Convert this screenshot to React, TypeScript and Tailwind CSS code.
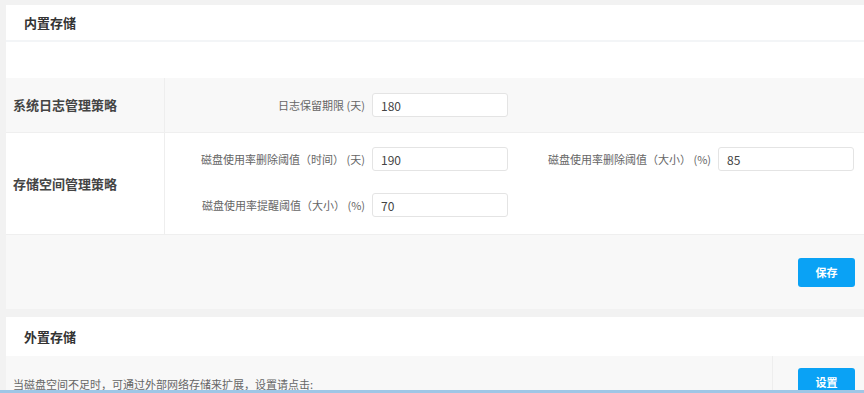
import { useState } from "react";

const font = { fontFamily: '"Noto Sans CJK SC", "Noto Sans", sans-serif' };

function Field({ label, value, labelW }: { label: string; value: string; labelW: string }) {
    const [v, setV] = useState(value);
    return (
        <div className="flex items-center">
            <span className={`${labelW} text-right text-[11px] text-[#666] pr-[7px] whitespace-nowrap`}>{label}</span>
            <input
                value={v}
                onChange={(e) => setV(e.target.value)}
                className="w-[136px] h-[24px] border border-[#e4e4e4] rounded-[3px] bg-white px-[8px] text-[12px] text-[#444] outline-none"
            />
        </div>
    );
}

export default function App() {
    return (
        <div className="relative h-[393px] w-[864px] overflow-hidden bg-[#f2f2f2] pt-[5px] pl-[6px]" style={font}>
            {/* 内置存储 */}
            <div className="bg-white">
                <div className="h-[37px] flex items-center pl-[18px] border-b-2 border-[#f3f5f7]">
                    <span className="text-[13px] font-bold text-[#333]">内置存储</span>
                </div>
                <div className="h-[36px]" />
                <div className="flex h-[55px] bg-[#f8f8f8] border-b border-[#efefef]">
                    <div className="w-[159px] flex items-center pl-[7px] border-r border-[#eeeeee]">
                        <span className="text-[13px] font-semibold text-[#444]">系统日志管理策略</span>
                    </div>
                    <div className="flex items-center">
                        <Field label="日志保留期限 (天)" value="180" labelW="w-[207px]" />
                    </div>
                </div>
                <div className="flex h-[102px] border-b border-[#efefef]">
                    <div className="w-[159px] flex items-center pl-[7px] border-r border-[#eeeeee]">
                        <span className="text-[13px] font-semibold text-[#444]">存储空间管理策略</span>
                    </div>
                    <div className="flex flex-col pt-[14px] gap-[22px]">
                        <div className="flex">
                            <Field label="磁盘使用率删除阈值（时间） (天)" value="190" labelW="w-[207px]" />
                            <Field label="磁盘使用率删除阈值（大小） (%)" value="85" labelW="w-[210px]" />
                        </div>
                        <Field label="磁盘使用率提醒阈值（大小） (%)" value="70" labelW="w-[207px]" />
                    </div>
                </div>
                <div className="h-[74px] bg-[#f8f8f8] flex items-center justify-end pr-[9px]">
                    <button className="w-[57px] h-[29px] rounded-[3px] bg-[#0aa2f5] text-white text-[11px] font-bold">保存</button>
                </div>
            </div>

            {/* 外置存储 */}
            <div className="mt-[8px] bg-white">
                <div className="h-[39px] flex items-center pl-[18px]">
                    <span className="text-[13px] font-bold text-[#333]">外置存储</span>
                </div>
                <div className="flex h-[40px] bg-[#f8f8f8]">
                    <div className="flex-1 flex items-end pb-[4px] pl-[7px] border-r border-[#eeeeee]">
                        <span className="text-[11px] text-[#666]">当磁盘空间不足时，可通过外部网络存储来扩展，设置请点击:</span>
                    </div>
                    <div className="w-[91px] flex justify-end pr-[9px] pt-[12px]">
                        <button className="w-[57px] h-[29px] rounded-[3px] bg-[#0aa2f5] text-white text-[11px] font-bold">设置</button>
                    </div>
                </div>
            </div>

            <div className="absolute left-0 right-0 bottom-0 h-[3px] bg-[#9fc6e6]" />
        </div>
    );
}
